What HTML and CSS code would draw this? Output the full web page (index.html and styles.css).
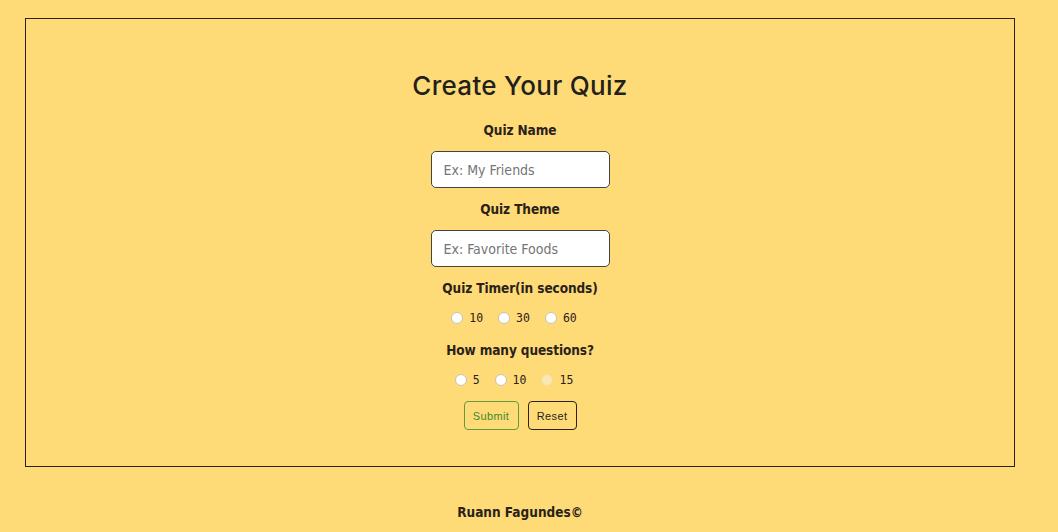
FILE: index.html
```html
<!DOCTYPE html>
<html>
<head>
<meta charset="utf-8">
<link rel="stylesheet" href="styles.css">
</head>
<body>
<main class="card">
  <h1 class="title">Create Your Quiz</h1>
  <form class="form">
    <label class="label" for="qname">Quiz Name</label>
    <input class="field" id="qname" type="text" placeholder="Ex: My Friends">
    <label class="label" for="qtheme">Quiz Theme</label>
    <input class="field" id="qtheme" type="text" placeholder="Ex: Favorite Foods">
    <p class="label">Quiz Timer(in seconds)</p>
    <div class="radios">
      <label class="opt"><input class="radio" type="radio" name="timer">10</label>
      <label class="opt"><input class="radio" type="radio" name="timer">30</label>
      <label class="opt"><input class="radio" type="radio" name="timer">60</label>
    </div>
    <p class="label">How many questions?</p>
    <div class="radios last">
      <label class="opt"><input class="radio" type="radio" name="count">5</label>
      <label class="opt"><input class="radio" type="radio" name="count">10</label>
      <label class="opt"><input class="radio faded" type="radio" name="count">15</label>
    </div>
    <div class="buttons">
      <button class="btn submit" type="button">Submit</button>
      <button class="btn reset" type="button">Reset</button>
    </div>
  </form>
</main>
<footer class="footer">Ruann Fagundes©</footer>
</body>
</html>
```
FILE: styles.css
```css
html, body {
  margin: 0;
  padding: 0;
  background: #ffdb78;
}
body {
  padding-top: 18px;
  font-family: "DejaVu Sans Condensed", "Liberation Sans", sans-serif;
  color: #2a2218;
}
.card {
  box-sizing: border-box;
  width: 990px;
  height: 449px;
  margin-left: 25px;
  border: 1px solid #2a2218;
  display: flex;
  flex-direction: column;
  align-items: center;
  padding-top: 51px;
}
.title {
  margin: 0;
  font-family: "Inter", "Liberation Sans", sans-serif;
  font-weight: 500;
  font-size: 26px;
  line-height: 32px;
  letter-spacing: 0.3px;
  color: #231f1a;
}
.form {
  display: flex;
  flex-direction: column;
  align-items: center;
  margin-top: 19px;
}
.label {
  margin: 0;
  font-weight: bold;
  font-size: 13.5px;
  line-height: 18px;
  letter-spacing: -0.1px;
}
.field {
  box-sizing: border-box;
  width: 179px;
  height: 37px;
  margin: 12px 0 12px;
  border: 1px solid #444;
  border-radius: 5px;
  background: #fff;
  padding: 0 12px;
  font-family: "DejaVu Sans Condensed", sans-serif;
  font-size: 14px;
}
.field::placeholder {
  color: #757575;
}
.radios {
  display: flex;
  gap: 15px;
  margin: 14px 0 16px;
  padding-right: 12px;
  height: 14px;
  align-items: center;
}
.radios.last {
  margin-bottom: 14px;
}
.opt {
  display: flex;
  align-items: center;
  gap: 6px;
  font-family: "DejaVu Sans Mono", "Liberation Mono", monospace;
  font-size: 11.5px;
}
.radio {
  appearance: none;
  -webkit-appearance: none;
  margin: 0;
  width: 12px;
  height: 12px;
  border: 1px solid #c9c3b4;
  border-radius: 50%;
  background: #fff;
}
.radio.faded {
  background: #fbe7b3;
  border-color: #f5dca0;
}
.buttons {
  display: flex;
  gap: 9px;
}
.btn {
  box-sizing: border-box;
  height: 29px;
  background: transparent;
  border-radius: 4px;
  font-family: "Liberation Sans", sans-serif;
  font-size: 11px;
  letter-spacing: 0.4px;
  padding: 0 6px;
}
.submit {
  border: 1px solid #5f9e3a;
  color: #3d8a2c;
  width: 55px;
}
.reset {
  border: 1px solid #2a2218;
  color: #2a2218;
  width: 49px;
}
.footer {
  width: 990px;
  margin-left: 25px;
  text-align: center;
  margin-top: 37px;
  font-weight: bold;
  font-size: 13.5px;
}
```
